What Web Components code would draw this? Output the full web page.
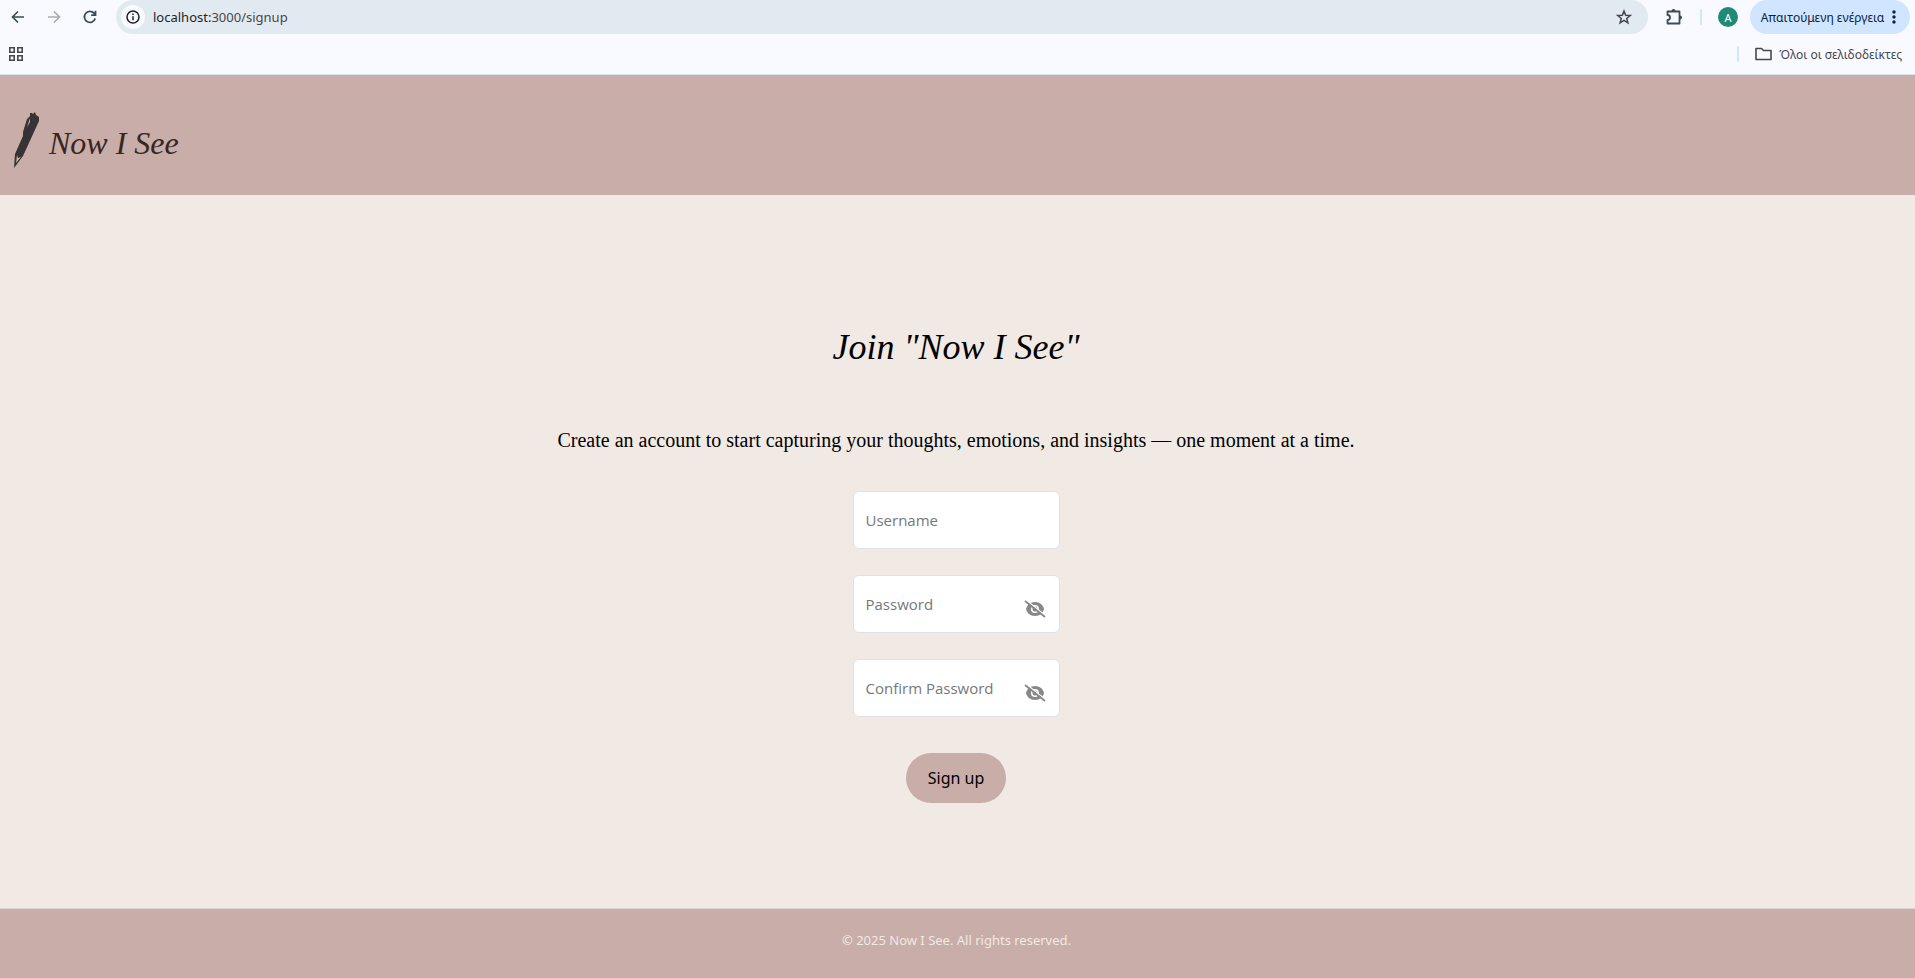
<!DOCTYPE html>
<html lang="en">
<head>
<meta charset="utf-8">
<title>Now I See</title>
<style>
html, body { margin: 0; height: 100%; }
body { font-family: "Noto Sans", "Open Sans", sans-serif; background: #f1e9e4; }
</style>
</head>
<body>
<now-app></now-app>
<script>
const define = (name, html, setup) => {
  const t = document.createElement('template');
  t.innerHTML = html;
  customElements.define(name, class extends HTMLElement {
    constructor() {
      super();
      this.attachShadow({ mode: 'open' }).append(t.content.cloneNode(true));
    }
    connectedCallback() { if (setup) setup(this, this.shadowRoot); }
  });
};

define('browser-bar', `
<style>
:host { display: block; background: #f8faff; border-bottom: 1px solid #dfe1e8; color: #45464f; font-family: "Noto Sans", "Open Sans", sans-serif; }
button { border: 0; background: none; padding: 0; font: inherit; color: inherit; display: flex; align-items: center; justify-content: center; }
svg { display: block; flex: none; }
.tools { display: flex; align-items: center; height: 34px; padding-right: 5px; }
.nav { display: flex; width: 116px; color: #3c4a59; }
.nav button { width: 36px; height: 34px; }
.nav button:disabled { color: #a9acb2; }
.address { flex: 1; display: flex; align-items: center; height: 34px; border-radius: 17px; background: #e2eaf1; padding: 0 16px 0 5px; gap: 8px; color: #1f1f1f; }
.info { width: 24px; height: 24px; border-radius: 12px; background: #f8faff; }
.url { flex: 1; font-size: 13px; line-height: 20px; color: #474747; }
.url b { font-weight: 400; color: #1f1f1f; }
.ext { width: 52px; height: 34px; }
.rule { width: 2px; height: 16px; border-radius: 1px; background: #d0e5ff; }
.avatar { width: 20px; height: 20px; border-radius: 10px; background: #20897a; color: #fff; font-size: 11px; margin: 0 12px 0 16px; }
.action { height: 34px; border-radius: 17px; background: #d0e5ff; color: #0b2440; width: 160px; gap: 8px; padding-right: 3px; font-size: 12px; white-space: nowrap; }
.marks { display: flex; align-items: center; height: 40px; padding: 0 13px 0 8px; }
.marks .rule { margin: 0 16px 0 auto; }
.all { font-size: 12px; gap: 7px; white-space: nowrap; }
</style>
<div class="tools">
  <div class="nav">
    <button aria-label="Back"><svg width="16" height="16" viewBox="0 0 16 16" fill="none" stroke="currentColor" stroke-width="1.7"><path d="M14 8H3M8 2.5 2.5 8 8 13.5"/></svg></button>
    <button aria-label="Forward" disabled><svg width="16" height="16" viewBox="0 0 16 16" fill="none" stroke="currentColor" stroke-width="1.7"><path d="M2 8h11M8 2.5 13.5 8 8 13.5"/></svg></button>
    <button aria-label="Reload"><svg width="16" height="16" viewBox="0 0 16 16" fill="none" stroke="currentColor" stroke-width="1.8"><path d="M13.200 9.500A5.500 5.500 0 1 1 12 4.200L13.500 6M13.500 1.800V6.200H9.200"/></svg></button>
  </div>
  <div class="address">
    <button class="info" aria-label="Site information"><svg width="14" height="14" viewBox="0 0 14 14" fill="none" stroke="currentColor" stroke-width="1.5"><circle cx="7" cy="7" r="6"/><path d="M7 6.200v4M7 3.500v1.500"/></svg></button>
    <span class="url"><b>localhost:</b>3000/signup</span>
    <button aria-label="Bookmark"><svg width="16" height="16" viewBox="0 0 16 16" fill="none" stroke="#45464f" stroke-width="1.5"><path d="m8 2 1.700 4.200 4.500.3-3.500 2.900 1.200 4.400L8 11.400l-3.900 2.400 1.200-4.400L1.800 6.500l4.500-.3z"/></svg></button>
  </div>
  <button class="ext" aria-label="Extensions"><svg width="18" height="18" viewBox="0 0 18 18" fill="none" stroke="#3c4a59" stroke-width="1.8"><path d="M2.500 3.500H14.500V15.500H2.500V12a2.500 2.500 0 0 0 0-5z" stroke-linejoin="round"/><path d="M6.500 3a2 2 0 0 1 4 0zM15 7.500a2 2 0 0 1 0 4z" fill="#3c4a59" stroke="none"/></svg></button>
  <span class="rule"></span>
  <button class="avatar" aria-label="Profile">A</button>
  <button class="action">Απαιτούμενη ενέργεια<svg width="4" height="16" viewBox="0 0 4 16" fill="currentColor"><circle cx="2" cy="3" r="1.700"/><circle cx="2" cy="8" r="1.700"/><circle cx="2" cy="13" r="1.700"/></svg></button>
</div>
<div class="marks">
  <button aria-label="Apps"><svg width="16" height="16" viewBox="0 0 16 16" fill="none" stroke="#45464f" stroke-width="1.6"><path d="M1.800 1.800h4.400v4.400H1.800zM9.800 1.800h4.400v4.400H9.800zM1.800 9.800h4.400v4.400H1.800zM9.800 9.800h4.400v4.400H9.800z"/></svg></button>
  <span class="rule"></span>
  <button class="all"><svg width="17" height="14" viewBox="0 0 17 14" fill="none" stroke="currentColor" stroke-width="1.6" stroke-linejoin="round"><path d="M1 1.500h5.500l2 2H16v9H1z"/></svg>Όλοι οι σελιδοδείκτες</button>
</div>`);

define('site-header', `
<style>
:host { display: flex; align-items: center; height: 120px; background: #c8ada8; box-sizing: border-box; padding: 10px 14px 0; }
a { display: flex; align-items: center; gap: 9px; color: #38261f; text-decoration: none; font: italic 32px/48px "Liberation Serif", serif; }
span { padding-top: 6px; }
svg { display: block; flex: none; }
</style>
<a href="#" aria-label="Now I See">
  <svg width="26" height="56" viewBox="0 0 26 56"><path d="M0 56 1 42 9 24 9 20 13 7 16 4 16 1 18 1 19 2 21 0 22 3 25 5 25 9 9 44z" fill="#373334"/><path d="m3 43 1 3 3-1-5 6zM16 6l-3 9 3-5z" fill="#c8ada8"/></svg>
  <span>Now I See</span>
</a>`);

define('text-field', `
<style>
:host { display: block; width: 207px; }
.box { display: flex; align-items: center; box-sizing: border-box; height: 58px; border: 1px solid #dee2e6; border-radius: 6px; background: #fff; padding: 0 12px; }
input { flex: 1; min-width: 0; border: 0; padding: 0; outline: 0; background: none; font: 15px/24px "Open Sans", "Noto Sans", sans-serif; color: #212529; }
input::placeholder { color: #75787b; opacity: 1; }
button { border: 0; padding: 10px 0 0; background: none; color: #888; }
svg { display: block; }
</style>
<div class="box"><input></div>`, (host, root) => {
  const input = root.querySelector('input');
  const label = host.getAttribute('label');
  input.placeholder = label;
  input.setAttribute('aria-label', label);
  if (!host.hasAttribute('secret')) return;
  input.type = 'password';
  const b = document.createElement('button');
  b.type = 'button';
  b.setAttribute('aria-label', 'Show password');
  b.innerHTML = '<svg width="24" height="20" viewBox="0 0 24 20" fill="currentColor"><path fill-rule="evenodd" d="M12 3C7 3 4 6 3 10c1 4 4 7 9 7s8-3 9-7C20 6 17 3 12 3zm0 3a4 4 0 1 1 0 8 4 4 0 0 1 0-8z"/><circle cx="12" cy="10" r="2.500"/><path d="m3 1 20 16" fill="none" stroke="#fff" stroke-width="1.500"/><path d="m2 2 20 16" fill="none" stroke="currentColor" stroke-width="1.800"/></svg>';
  b.onclick = () => { input.type = input.type === 'password' ? 'text' : 'password'; };
  root.querySelector('.box').append(b);
});

define('signup-form', `
<style>
:host { display: flex; flex-direction: column; align-items: center; padding: 120px 16px 24px; }
h1 { margin: 0; font: italic 36px/64px "Liberation Serif", serif; color: #000; }
p { margin: 46px 0 36px; font: 20px/30px "Liberation Serif", serif; color: #000; text-align: center; }
form { display: flex; flex-direction: column; align-items: center; gap: 26px; }
button { margin-top: 10px; width: 100px; height: 50px; border: 0; border-radius: 25px; background: #c8ada8; color: #000; font: 16px/24px "Noto Sans", "Open Sans", sans-serif; }
</style>
<h1>Join "Now I See"</h1>
<p>Create an account to start capturing your thoughts, emotions, and insights — one moment at a time.</p>
<form>
  <text-field label="Username"></text-field>
  <text-field label="Password" secret></text-field>
  <text-field label="Confirm Password" secret></text-field>
  <button type="button">Sign up</button>
</form>`);

define('site-footer', `
<style>
:host { display: block; box-sizing: border-box; height: 70px; padding: 20px 2px 0 0; border-top: 1px solid #d9d5d4; background: #c8ada8; color: #f1e9e4; font-size: 13px; line-height: 22px; text-align: center; }
</style>
<slot></slot>`);

define('now-app', `
<style>
:host { display: flex; flex-direction: column; min-height: 100vh; }
main { flex: 1; padding-right: 3px; }
</style>
<browser-bar></browser-bar>
<site-header></site-header>
<main><signup-form></signup-form></main>
<site-footer>© 2025 Now I See. All rights reserved.</site-footer>`);
</script>
</body>
</html>
